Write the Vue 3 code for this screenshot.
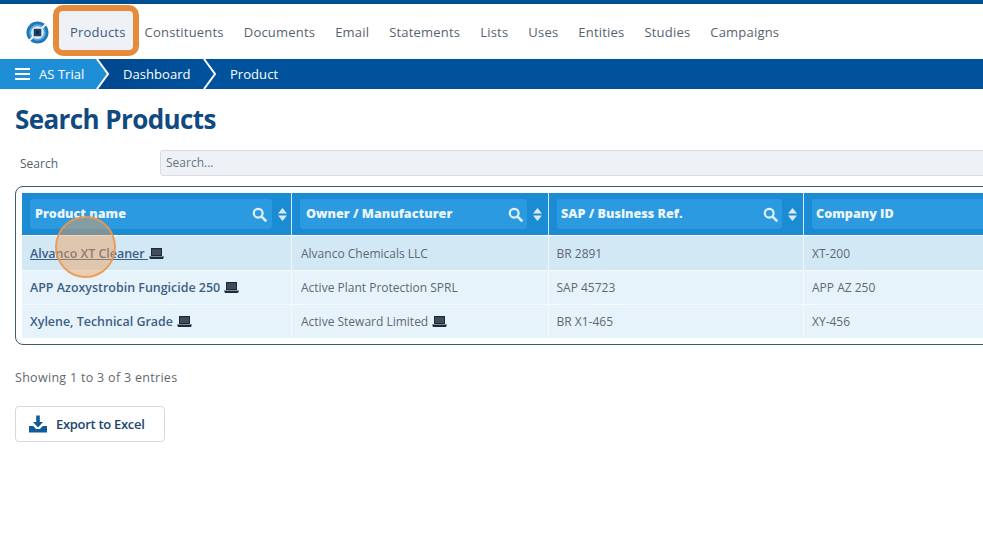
<script setup>
const navItems = ['Constituents', 'Documents', 'Email', 'Statements', 'Lists', 'Uses', 'Entities', 'Studies', 'Campaigns']
const columns = [
  { name: 'Product name', w: 270, tools: true },
  { name: 'Owner / Manufacturer', w: 257, tools: true },
  { name: 'SAP / Business Ref.', w: 255, tools: true },
  { name: 'Company ID', w: 260, tools: false },
]
const rows = [
  { name: 'Alvanco XT Cleaner', link: true, owner: 'Alvanco Chemicals LLC', ownerIcon: false, ref: 'BR 2891', id: 'XT-200' },
  { name: 'APP Azoxystrobin Fungicide 250', link: false, owner: 'Active Plant Protection SPRL', ownerIcon: false, ref: 'SAP 45723', id: 'APP AZ 250' },
  { name: 'Xylene, Technical Grade', link: false, owner: 'Active Steward Limited', ownerIcon: true, ref: 'BR X1-465', id: 'XY-456' },
]
</script>

<template>
  <div class="page">
    <header class="nav">
      <svg class="logo" width="23" height="23" viewBox="0 0 24 24">
        <circle cx="12" cy="12" r="11.5" fill="#1c78b8" />
        <circle cx="12" cy="12" r="8.6" fill="#5fa9d9" />
        <circle cx="12" cy="12" r="6.6" fill="#e4f0f8" />
        <path d="M2.5 21.5 7.5 16.5M16.5 7.5l5-5" stroke="#eef6fb" stroke-width="2.2" />
        <rect x="8" y="8" width="8" height="8" rx="1" fill="#1d4369" />
        <rect x="10.3" y="10.3" width="3.4" height="3.4" fill="#0d2b4a" />
      </svg>
      <a class="nav-item active">Products<span class="highlight"></span></a>
      <a v-for="item in navItems" :key="item" class="nav-item">{{ item }}</a>
    </header>

    <nav class="crumbs">
      <div class="crumb first">
        <span class="burger"><i></i><i></i><i></i></span>
        AS Trial
        <svg class="chev" width="14" height="30" viewBox="0 0 14 30"><path d="M0 0H1L12 15 1 30H0Z" fill="#1e8ed6" /><path d="M1 0 12 15 1 30" fill="none" stroke="#fff" stroke-width="2" /></svg>
      </div>
      <div class="crumb second">
        Dashboard
        <svg class="chev" width="14" height="30" viewBox="0 0 14 30"><path d="M1 0 12 15 1 30" fill="none" stroke="#fff" stroke-width="2" /></svg>
      </div>
      <div class="crumb third">Product</div>
    </nav>

    <main class="content">
      <h1>Search Products</h1>
      <div class="search-row">
        <label>Search</label>
        <div class="search-input">Search...</div>
      </div>

      <div class="table-box">
        <div class="grid head">
          <div v-for="c in columns" :key="c.name" class="th" :style="{ width: c.w + 'px' }">
            <div class="th-inner">
              <span class="th-label">{{ c.name }}</span>
              <svg v-if="c.tools" class="mag" width="15" height="15" viewBox="0 0 15 15"><circle cx="6.2" cy="6.2" r="4.4" fill="none" stroke="#e3f1fb" stroke-width="2.2" /><path d="M9.6 9.6 13.6 13.6" stroke="#e3f1fb" stroke-width="2.6" stroke-linecap="round" /></svg>
            </div>
            <svg v-if="c.tools" class="sort" width="9" height="13" viewBox="0 0 9 13"><path d="M4.5 0 9 5.5H0ZM4.5 13 0 7.5H9Z" fill="#d9ebf8" /></svg>
          </div>
        </div>
        <div v-for="(r, i) in rows" :key="r.name" class="grid row" :class="{ hot: i === 0 }">
          <div class="td strong" :style="{ width: columns[0].w + 'px' }">
            <span :class="{ link: r.link }">{{ r.name }} <svg class="laptop" width="15" height="11" viewBox="0 0 15 11"><path d="M2 0H13V8H2Z" fill="#1f2a38" /><path d="M3 1.2H12V7H3Z" fill="#3d4c5e" /><path d="M0 8.5H15L14 11H1Z" fill="#1f2a38" /></svg></span>
          </div>
          <div class="td" :style="{ width: columns[1].w + 'px' }">
            {{ r.owner }}
            <svg v-if="r.ownerIcon" class="laptop" width="15" height="11" viewBox="0 0 15 11"><path d="M2 0H13V8H2Z" fill="#1f2a38" /><path d="M3 1.2H12V7H3Z" fill="#3d4c5e" /><path d="M0 8.5H15L14 11H1Z" fill="#1f2a38" /></svg>
          </div>
          <div class="td" :style="{ width: columns[2].w + 'px' }">{{ r.ref }}</div>
          <div class="td" :style="{ width: columns[3].w + 'px' }">{{ r.id }}</div>
        </div>
      </div>

      <p class="info">Showing 1 to 3 of 3 entries</p>

      <button class="export">
        <svg width="18" height="18" viewBox="0 0 19 18"><path d="M7.6 0h3.8v7h3.4L9.5 12.6 4.2 7h3.4Z" fill="#0f5c9c" /><path d="M0 11h4.5l3 3.4h4l3-3.4H19v7H0Z" fill="#0f5c9c" /></svg>
        Export to Excel
      </button>
    </main>

    <div class="click-mark"></div>
  </div>
</template>

<style>
html, body { margin: 0; overflow: hidden; background: #fff; }
</style>

<style scoped>
.page {
  position: relative;
  width: 983px;
  height: 550px;
  overflow: hidden;
  background: #fff;
  font-family: "Open Sans", "Liberation Sans", sans-serif;
  color: #555f69;
  font-size: 13px;
}
.nav {
  height: 55px;
  box-sizing: content-box;
  border-top: 4px solid #004f91;
  display: flex;
  align-items: center;
  padding-left: 26px;
}
.nav { height: 53px; padding-bottom: 2px; }
.logo { flex: none; margin-right: 10px; margin-top: 3px; }
.nav-item {
  position: relative;
  height: 39px;
  padding: 0 10px;
  line-height: 43px;
  font-size: 13px;
  letter-spacing: 0.2px;
  color: #56636f;
  white-space: nowrap;
}
.nav-item.active {
  background: #eef1f6;
  color: #3f5b7a;
  padding: 0 7px 0 11px;
  margin-right: 2px;
  border-radius: 3px;
}
.highlight {
  position: absolute;
  inset: -6px;
  border: 6px solid #e68a3c;
  border-radius: 10px;
}
.crumbs {
  height: 30px;
  display: flex;
  background: #00529c;
  color: #fff;
  font-size: 13px;
  letter-spacing: 0.05px;
}
.crumb {
  position: relative;
  display: flex;
  align-items: center;
  white-space: nowrap;
}
.chev { position: absolute; top: 0; right: -14px; z-index: 1; }
.first { width: 96px; background: #1e8ed6; padding-left: 15px; box-sizing: border-box; }
.second { width: 107px; padding-left: 27px; box-sizing: border-box; background: linear-gradient(90deg, #00478f, #00529c); }
.third { padding-left: 27px; }
.burger {
  display: flex;
  flex-direction: column;
  gap: 3px;
  width: 15px;
  margin-right: 9px;
}
.burger i { display: block; height: 2px; background: #fff; }
.content { padding: 0 0 0 15px; }
h1 {
  margin: 0;
  padding-top: 13px;
  font-size: 26px;
  line-height: 34px;
  font-weight: 700;
  letter-spacing: -0.6px;
  color: #114a80;
}
.search-row {
  display: flex;
  align-items: center;
  margin-top: 14px;
  height: 26px;
  font-size: 12px;
}
.search-row label { width: 145px; padding-left: 5px; box-sizing: border-box; color: #555f69; }
.search-input {
  flex: 1;
  height: 26px;
  box-sizing: border-box;
  line-height: 24px;
  padding-left: 5px;
  margin-right: -4px;
  background: #eef1f6;
  border: 1px solid #d9dde2;
  border-radius: 3px 0 0 3px;
  color: #6a7480;
}
.table-box {
  margin-top: 10px;
  width: 1060px;
  height: 159px;
  box-sizing: border-box;
  border: 1px solid #3a5f68;
  border-radius: 8px;
  padding: 6px;
}
.grid { display: flex; }
.th {
  flex: none;
  height: 42px;
  box-sizing: border-box;
  background: #1b8bd3;
  border-right: 1px solid #d8ecf7;
  padding: 6px 0 6px 8px;
  display: flex;
  align-items: center;
  gap: 6px;
  color: #eaf5fc;
  font-size: 12.6px;
  font-weight: 800;
}
.th-inner {
  flex: 1;
  height: 30px;
  background: #2c9ae0;
  border-radius: 3px;
  display: flex;
  align-items: center;
  justify-content: space-between;
  padding: 0 3px 0 5px;
  white-space: nowrap;
}
.th:nth-child(2) .th-inner { padding-left: 6px; }
.th:nth-child(3) .th-inner,
.th:nth-child(4) .th-inner { padding-left: 4px; }
.th-label { margin-top: -2px; }
.mag { margin-right: 2px; }
.th:nth-child(2) .mag,
.th:nth-child(3) .mag { margin-right: 1px; }
.sort { flex: none; margin-right: 4px; }
.th:nth-child(2) .sort,
.th:nth-child(3) .sort { margin-right: 6px; }
.head { margin-bottom: 1px; }
.row { height: 34px; background: #e7f3fa; }
.row.hot { background: #d2e8f5; }
.row + .row { box-shadow: inset 0 1px 0 #f4fafd; }
.td {
  flex: none;
  box-sizing: border-box;
  padding-left: 9px;
  line-height: 36px;
  height: 34px;
  border-right: 1px solid #f2f9fd;
  font-size: 12px;
  color: #5e6972;
  white-space: nowrap;
}
.td:nth-child(3) { padding-left: 7.5px; }
.td:nth-child(4) { padding-left: 8px; }
.td.strong { padding-left: 8px; font-weight: 600; color: #3d5f85; font-size: 12.45px; }
.link { text-decoration: underline; }
.laptop { vertical-align: -1px; margin-left: 1px; }
.info { margin: 24px 0 0; line-height: 18px; font-size: 12.5px; letter-spacing: 0.3px; color: #5f6870; }
.export {
  display: flex;
  align-items: center;
  gap: 9px;
  margin-top: 19px;
  width: 150px;
  height: 36px;
  box-sizing: border-box;
  padding: 0 0 0 13px;
  background: #fff;
  border: 1px solid #d5dae0;
  border-radius: 4px;
  font-family: inherit;
  font-size: 13px;
  font-weight: 600;
  letter-spacing: -0.3px;
  color: #22456f;
}
.click-mark {
  position: absolute;
  left: 55px;
  top: 216px;
  width: 61px;
  height: 62px;
  box-sizing: border-box;
  border-radius: 50%;
  background: rgba(240, 160, 90, 0.45);
  border: 2px solid rgba(236, 150, 75, 0.85);
}
</style>
